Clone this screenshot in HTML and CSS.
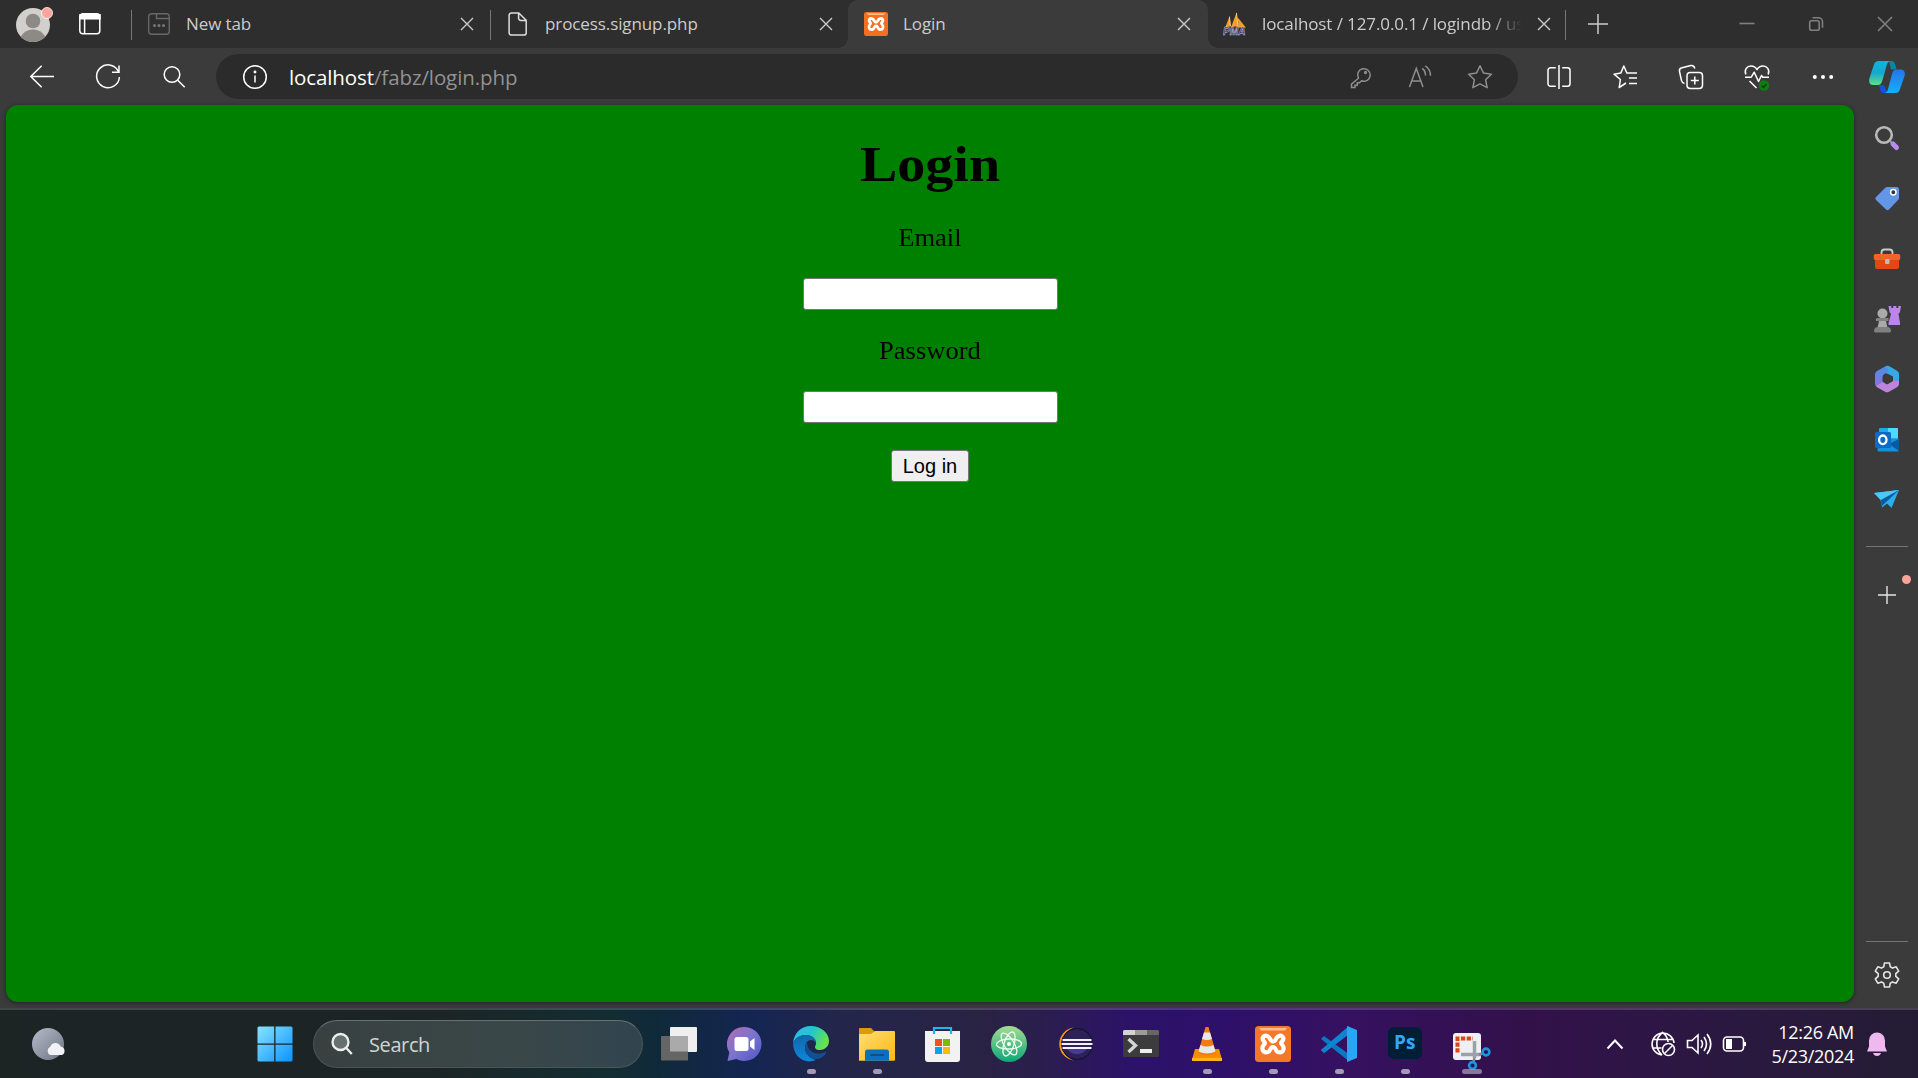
FILE: index.html
```html
<!DOCTYPE html>
<html lang="en">
<head>
<meta charset="utf-8">
<title>Login</title>
<link rel="stylesheet" href="styles.css">
</head>
<body>
<div class="tabstrip">
  <div class="strip-tools">
    <svg class="avatar" width="40" height="40" viewBox="0 0 40 40"><defs><clipPath id="av"><circle cx="18" cy="21" r="17"/></clipPath></defs><circle cx="18" cy="21" r="17" fill="#d2d0cd"/><g clip-path="url(#av)" fill="#8d8985"><circle cx="18" cy="17" r="7.3"/><ellipse cx="18" cy="38" rx="13.5" ry="12.5"/></g><circle cx="32" cy="9" r="5.5" fill="#fba49c" stroke="#fff"  stroke-width=".8"/></svg>
    <svg width="24" height="24" viewBox="0 0 24 24" fill="none" stroke="#fff" stroke-width="1.5"><rect x="1.8" y="1.8" width="20" height="20" rx="3"/><path d="M2 2.8h20v4H2z" fill="#fff"/><path d="M6.6 7v15"/></svg>
  </div>
  <div class="tab divided">
    <svg class="tab-icon" width="24" height="24" viewBox="0 0 24 24" fill="none" stroke="#686868" stroke-width="1.4"><rect x="1.7" y="1.7" width="20.6" height="20.6" rx="3"/><path d="M9.5 2v4.5h12.5"/><g fill="#777" stroke="none"><circle cx="7.5" cy="13.5" r="1.5"/><circle cx="12" cy="13.5" r="1.5"/><circle cx="16.5" cy="13.5" r="1.5"/></g></svg>
    <span class="tab-title">New tab</span>
    <svg class="tab-close" width="14" height="14" viewBox="0 0 14 14"><path d="M1 1l12 12M13 1L1 13"/></svg>
  </div>
  <div class="tab divided second">
    <svg class="tab-icon" width="24" height="24" viewBox="0 0 24 24" fill="none" stroke="#ddd" stroke-width="1.5"><path d="M5.5.9h7.3l7.4 7.4v12.4a2.4 2.4 0 0 1-2.4 2.4H5.5a2.4 2.4 0 0 1-2.4-2.4V3.300A2.400 2.400 0 0 1 5.500.9zM12.600 1v5.200a2.200 2.200 0 0 0 2.200 2.200h5.300"/></svg>
    <span class="tab-title">process.signup.php</span>
    <svg class="tab-close" width="14" height="14" viewBox="0 0 14 14"><path d="M1 1l12 12M13 1L1 13"/></svg>
  </div>
  <div class="tab active">
    <svg class="tab-icon" width="24" height="24" viewBox="0 0 36 36"><rect width="36" height="36" rx="3.500" fill="#f37021"/><path d="M4 2h28l-2 2.500H6z" fill="#ffbd8c"/><path d="M13 10.500c-4-2.500-7 1.500-4 5 1 1 1 2 0 3-3 3.500-1.500 9 4 7.500 3-1 2-5 5-5s2 4 5 5c5.500 1.500 7-4 4-7.500-1-1-1-2 0-3 3-3.500 0-7.500-4-5-3 2-2 5-5 5s-2-3-5-5z" fill="none" stroke="#fff" stroke-width="4.200"/></svg>
    <span class="tab-title">Login</span>
    <svg class="tab-close" width="14" height="14" viewBox="0 0 14 14"><path d="M1 1l12 12M13 1L1 13"/></svg>
  </div>
  <div class="tab last">
    <svg class="tab-icon" width="26" height="26" viewBox="0 0 26 26"><path d="M7 5L2 18q4-3 6.500-2zM14.500 1L8.500 17q4-2 8-1zM16 6l9 11q-2-1-8 0z" fill="#f89c27"/><path d="M7 5l1 10M14.500 1l2 15" stroke="#ffd39a"/><text x="0" y="25" class="pma">PMA</text></svg>
    <span class="tab-title fade">localhost / 127.0.0.1 / logindb / us</span>
    <svg class="tab-close" width="14" height="14" viewBox="0 0 14 14"><path d="M1 1l12 12M13 1L1 13"/></svg>
  </div>
  <svg class="new-tab" width="22" height="22" viewBox="0 0 22 22" stroke="#ccc" stroke-width="1.500"><path d="M11 1v20M1 11h20"/></svg>
  <div class="window-controls">
    <svg width="16" height="16" viewBox="0 0 16 16"><path d="M.5 7.500h15"/></svg>
    <svg width="16" height="16" viewBox="0 0 16 16"><rect x="1.700" y="4.700" width="9.500" height="9.500" rx="1.800"/><path d="M4.500 1.800h6a4 4 0 0 1 4 4v6"/></svg>
    <svg width="16" height="16" viewBox="0 0 16 16"><path d="M1 1l14 14M15 1L1 15"/></svg>
  </div>
</div>

<div class="toolbar">
  <div class="cell"><svg width="26" height="26" viewBox="0 0 26 26"><path d="M25 12.500H2M12.700 1.800L1.800 12.500l10.900 10.700"/></svg></div>
  <div class="cell"><svg width="26" height="26" viewBox="0 0 26 26"><path d="M23.700 8.300A11.400 11.400 0 1 0 24.400 13M24 1.500v6.800h-7"/></svg></div>
  <div class="cell"><svg width="26" height="26" viewBox="0 0 26 26"><circle cx="11" cy="10.500" r="7.800"/><path d="M16.700 16.200l7 7"/></svg></div>
  <div class="address">
    <svg width="26" height="26" viewBox="0 0 26 26"><circle cx="13" cy="13" r="11.300"/><path d="M13 11.500v7"/><circle cx="13" cy="8" r=".7"/></svg>
    <span class="url"><b>localhost</b>/fabz/login.php</span>
    <div class="address-actions">
      <svg width="24" height="24" viewBox="0 0 24 24"><path d="M9.500 13.200a6.300 6.300 0 1 1 3 2.600l-2 2H8.300v2.400H6v2.200H2.500v-3.300z"/><circle cx="16.500" cy="7.500" r=".9"/></svg>
      <svg width="24" height="24" viewBox="0 0 24 24"><path d="M1.500 22L8.300 3.500 15 22M4 16h8.800M14.200 3.500c2.300 1.500 3.300 4 3.300 7M17.300.8c3.500 2.400 5.200 6 5.200 10"/></svg>
      <svg width="26" height="26" viewBox="0 0 26 26"><path class="join" d="M13 1.800l3.500 7.300 7.900 1.100-5.800 5.500 1.500 8L13 19.900l-7.100 3.800 1.500-8-5.800-5.500 7.900-1.100z"/></svg>
    </div>
  </div>
  <div class="actions">
    <div class="cell"><svg width="26" height="26" viewBox="0 0 26 26"><path d="M13 1v24M9.800 3.700H4.500a2.500 2.500 0 0 0-2.500 2.500v13.600a2.500 2.500 0 0 0 2.500 2.500h5.300M16.200 3.700h5.300A2.500 2.500 0 0 1 24 6.200v13.600a2.500 2.500 0 0 1-2.500 2.500h-5.300"/></svg></div>
    <div class="cell"><svg width="26" height="26" viewBox="0 0 26 26"><path class="join" d="M14 19l-6.800 4.500 1.200-8L2 10.200l6.800-1.100L11.800 2l3.100 7.100H25M17 14h8M17 19.500h8"/></svg></div>
    <div class="cell"><svg width="26" height="26" viewBox="0 0 26 26"><rect x="9" y="8.500" width="15.500" height="16" rx="3.200"/><path d="M16.800 12.500v8M12.800 16.500h8M6.500 19.500c-2-.5-2.700-1.500-3-2.800L1.500 7.500c-.4-2 .7-3.300 2.500-3.700l9-2.300c2-.4 3.200.5 3.800 3"/></svg></div>
    <div class="cell"><svg width="28" height="28" viewBox="0 0 28 28"><path class="join" d="M2.800 11.500C1 6.500 4 3 8 3c2.800 0 4.800 1.500 6 3.500C15.200 4.500 17.200 3 20 3c4 0 7 3.500 5.200 8.500M2 14.200h6.200l3-5 4.300 9.300 3-6 1.200 1.700H26M6.500 18l7 7"/><circle cx="21" cy="22.500" r="5.300" fill="#0f7b10" stroke="none"/><path d="M18.700 22.700l1.700 1.800 3-3.500" stroke="#063c06" stroke-width="1.200"/></svg></div>
    <div class="cell"><svg width="24" height="24" viewBox="0 0 24 24"><g fill="#fff" stroke="none"><circle cx="3.800" cy="12" r="2"/><circle cx="12" cy="12" r="2"/><circle cx="20.200" cy="12" r="2"/></g></svg></div>
    <div class="cell copilot"><svg width="36" height="34" viewBox="0 0 36 34"><defs><linearGradient id="cp1" x1="0" y1="0" x2="0" y2="1"><stop offset="0" stop-color="#0cb5df"/><stop offset=".5" stop-color="#16a8cf"/><stop offset="1" stop-color="#5de08c"/></linearGradient><linearGradient id="cp2" x1="0" y1="0" x2="0" y2="1"><stop offset="0" stop-color="#2375e8"/><stop offset="1" stop-color="#13b0fb"/></linearGradient></defs><g stroke="none"><path d="M20 1h2.500c2.500 0 3.500 2 5 8.500H22z" fill="#0785a8"/><path d="M10 25h5l3.500 8H15c-3 0-4-2-5-8z" fill="#1a4de0"/><path d="M10 1h11c-2.500 1-3 3-3.800 6l-4 14c-.8 2.700-2 4-4.500 4H4.500c-4 0-5-3-4-7l4.300-13C5.800 2 7 1 10 1z" fill="url(#cp1)"/><path d="M26 33H15.500c2.500-.5 3-2 3.800-5l3.700-14c.8-3 2-4.500 4.500-4.500h4c4 0 5 3 4 6.500l-4.500 13c-1 3-2 4-5 4z" fill="url(#cp2)"/></g></svg></div>
  </div>
</div>

<div class="workspace">
  <main class="page">
    <h1>Login</h1>
    <form class="login-form">
      <label for="email">Email</label>
      <input id="email" type="email">
      <label for="password">Password</label>
      <input id="password" type="password">
      <button type="button">Log in</button>
    </form>
  </main>
  <aside class="sidebar">
    <div class="side-item"><svg width="28" height="28" viewBox="0 0 28 28"><circle cx="11" cy="11" r="7.800" fill="none" stroke="#b9b9b9" stroke-width="2.600"/><path d="M17 17l3 3" stroke="#999" stroke-width="2"/><path d="M20 20l3.500 3.500" stroke="#b98af0" stroke-width="5" stroke-linecap="round"/></svg></div>
    <div class="side-item"><svg width="28" height="28" viewBox="0 0 28 28"><path d="M14 3h9.500A2.500 2.500 0 0 1 26 5.500V14q0 1-1 2l-9 9.500q-1.500 1.500-3 0L3 16q-1.500-1.500 0-3l9-9q1-1 2-1z" fill="#6496e8"/><circle cx="20.300" cy="8.300" r="2.700" fill="#333" stroke="#fff" stroke-width="1.500"/></svg></div>
    <div class="side-item"><svg width="28" height="28" viewBox="0 0 28 28"><path d="M8.500 9V7.500q0-3 3-3h5q3 0 3 3V9" fill="none" stroke="#ccc" stroke-width="1.800"/><path d="M2 13h24v9q0 2-2 2H4q-2 0-2-2z" fill="#e04a12"/><rect x=".8" y="9" width="26.400" height="6" rx="1.500" fill="#f3622b"/><rect x="12" y="14" width="4.500" height="5" rx="1" fill="#bbb"/></svg></div>
    <div class="side-item"><svg width="28" height="28" viewBox="0 0 28 28"><path d="M15.500 1h2.800v2h2V1h3v2h2V1H28l-1 6-1.500 2 1.500 9v2H15.500v-2L18 9l-1.500-2z" fill="#bd85ec"/><g fill="#aaa"><circle cx="9.500" cy="8.500" r="5"/><path d="M3 14h12v2H13l1.500 7h-10L6 16H3z"/></g><path d="M3.500 13h12v3h-12zM1 26q0-4 4-4h9q4 0 4 4 0 1.500-2 1.500H3Q1 27.500 1 26z" fill="#808080"/></svg></div>
    <div class="side-item"><svg width="28" height="28" viewBox="0 0 28 28"><defs><linearGradient id="m1" x1="0" y1="0" x2="0" y2="1"><stop offset="0" stop-color="#4b8fe6"/><stop offset="1" stop-color="#8e6fe0"/></linearGradient></defs><path d="M13 1q1.500-.7 3 0l8 4.700q2 1 2 3.300v10l-6-2.500v-5L14 8.500 8 7z" fill="#37a8e8"/><path d="M12.500 1.300L4 6Q2 7.200 2 9.500V19q0 2 2 2.500l6-3V10l6-4z" fill="url(#m1)"/><path d="M3 21l7-4 4 2.500 7-4 5 .5v3q0 2-2 3.300l-8 4.500q-2 1-4 0l-8-4.500z" fill="#bd84db"/><path d="M14 9l4.500 2.500v5L14 19l-4.500-2.500v-5z" fill="#3b3b3b"/></svg></div>
    <div class="side-item"><svg width="28" height="28" viewBox="0 0 28 28"><path d="M6 3q0-1 1-1h17q1 0 1 1v11H6z" fill="#20a9e7"/><path d="M15 2h9q1 0 1 1v9H15z" fill="#50d9ff"/><path d="M5 13h21v11q0 1.500-1.500 1.500H6q-1.500 0-1.500-1.500z" fill="#1490df"/><path d="M26 13v12L16 18z" fill="#0b5a9d"/><rect x="2" y="6" width="16" height="16" rx="1.500" fill="#0b6bc5"/><ellipse cx="9.800" cy="13.800" rx="3.700" ry="4.300" fill="none" stroke="#fff" stroke-width="2.300"/></svg></div>
    <div class="side-item"><svg width="28" height="28" viewBox="0 0 28 28"><path d="M1 7l25-3-7.500 18L14 17.500 9 21.500 7.500 14z" fill="#2aaeee"/><path d="M1 7l25-3L8 14z" fill="#4ac8fa"/><path d="M8 14L26 4 12.500 16.500 8.500 20.500z" fill="#075b9e"/></svg></div>
    <div class="side-rule first"></div>
    <div class="side-item add"><svg width="18" height="18" viewBox="0 0 18 18"><path d="M9 0v18M0 9h18" stroke="#e5e5e5" stroke-width="1.400"/></svg><i class="notice"></i></div>
    <div class="side-rule bottom"></div>
    <div class="side-item settings"><svg width="28" height="28" viewBox="0 0 28 28" fill="none" stroke="#e5e5e5" stroke-width="1.600" stroke-linejoin="round"><path d="M11.500 2h5l.8 3.800 2.200 1.300 3.700-1.300 2.500 4.300-2.900 2.600v2.600l2.900 2.600-2.500 4.300-3.700-1.300-2.200 1.300-.8 3.800h-5l-.8-3.800-2.200-1.300-3.700 1.300-2.500-4.300 2.900-2.600v-2.600l-2.900-2.600 2.500-4.300 3.700 1.300 2.200-1.300z"/><circle cx="14" cy="14" r="3.300"/></svg></div>
  </aside>
</div>

<div class="taskbar">
  <div class="app weather"><svg width="36" height="36" viewBox="0 0 36 36"><defs><linearGradient id="moon" x1="0" y1="0" x2="1" y2="1"><stop offset="0" stop-color="#b5bdca"/><stop offset="1" stop-color="#6d7584"/></linearGradient></defs><circle cx="17" cy="18" r="16" fill="url(#moon)"/><path d="M19.500 29a4.500 4.500 0 0 1-.3-8.300 5.600 5.600 0 0 1 10.500-.2A4.500 4.500 0 0 1 31 29z" fill="#f0f2f5"/></svg></div>
  <div class="app start"><svg width="36" height="36" viewBox="0 0 36 36"><defs><linearGradient id="win" x1="0" y1="0" x2="1" y2="1" ><stop offset="0" stop-color="#86e3ff"/><stop offset="1" stop-color="#0b93ff"/></linearGradient></defs><path d="M2 .5h15.200v17H.5V2Q.5.500 2 .500zM18.500.5H34q1.500 0 1.500 1.500v15.500h-17zM.5 18.800h16.700v16.700H2Q.5 35.500.5 34zM18.500 18.800h17V34q0 1.500-1.500 1.500H18.500z" fill="url(#win)"/></svg></div>
  <div class="search"><svg width="24" height="24" viewBox="0 0 24 24" fill="none" stroke="#eee" stroke-width="2.300"><circle cx="10.500" cy="10" r="8" fill="#65706f"/><path d="M16.300 16l5.500 6"/></svg><span>Search</span></div>
  <div class="apps">
    <div class="app"><svg width="36" height="36" viewBox="0 0 36 36"><rect x="9" y="1" width="27" height="25" rx="1" fill="#efefef"/><path d="M1 10h26v24.500H1q-1 0-1-1V11q0-1 1-1z" fill="#656565"/><path d="M9 10h18v15.500H9z" fill="#aaa"/></svg></div>
    <div class="app"><svg width="36" height="36" viewBox="0 0 36 36"><defs><linearGradient id="chat" x1="0" y1="0" x2="1" y2="1"><stop offset="0" stop-color="#b36db0"/><stop offset=".5" stop-color="#7b74cf"/><stop offset="1" stop-color="#4d56c8"/></linearGradient></defs><path d="M17.500 1a17 17 0 1 1-8 32L.5 35l1.800-8.500A17 17 0 0 1 17.500 1z" fill="url(#chat)"/><rect x="7.500" y="11" width="14" height="14" rx="2.500" fill="#fff"/><path d="M23 15.500l4.500-3.500v12L23 20.500z" fill="#fff"/></svg></div>
    <div class="app running"><svg width="36" height="36" viewBox="0 0 36 36"><defs><linearGradient id="e1" x1="0" y1="0" x2="1" y2=".4"><stop offset="0" stop-color="#35b7f0"/><stop offset=".55" stop-color="#26c5cb"/><stop offset="1" stop-color="#65e34d"/></linearGradient><linearGradient id="e2" x1="0" y1="0" x2="0" y2="1"><stop offset="0" stop-color="#1366aa"/><stop offset="1" stop-color="#0b88de"/></linearGradient></defs><path d="M0 17C1 7 8 0 18 0s18 7 18 15c0 6-5 9-9 9-4 0-5-1.500-5-3 0-1 1-1.500 1-4 0-4-4-8-10-8C7 9 2 12 0 17z" fill="url(#e1)"/><path d="M0 17c2-5 7-8 13-8 6 0 10 4 10 8-1-2-3-3-5-3-4 0-6 4-6 8 0 6 5 10 11 12-12 5-23-4-23-17z" fill="url(#e2)"/><path d="M14 16c-5 8 1 18 11 17 4-1 7-4 8-6 .5-1-.3-1.500-1-1-8 4-18 0-18-10z" fill="#114f93"/></svg></div>
    <div class="app running"><svg width="36" height="36" viewBox="0 0 36 36"><defs><linearGradient id="fold" x1="0" y1="0" x2="1" y2="1"><stop offset="0" stop-color="#ffdd73"/><stop offset="1" stop-color="#fbb911"/></linearGradient></defs><path d="M0 3q0-1 1-1h11l4 4v7H0z" fill="#dc9c09"/><path d="M0 8h12l4-3h19q1 0 1 1v28q0 .8-1 .8H0z" fill="url(#fold)"/><path d="M6 34.800V26q0-2.500 2.500-2.500h19q2.500 0 2.500 2.500v8.800z" fill="#0c70c0"/><path d="M11 29h14" stroke="#094b86" stroke-width="1.700"/></svg></div>
    <div class="app"><svg width="36" height="36" viewBox="0 0 36 36"><path d="M0 5h35v28q0 3-3 3H3q-3 0-3-3z" fill="#f2f2f2"/><path d="M9 8V2h17v6" fill="none" stroke="#23b3ee" stroke-width="2.200"/><path d="M10 13h7v7h-7z" fill="#f25022"/><path d="M18 13h7v7h-7z" fill="#7fba00"/><path d="M10 21h7v7h-7z" fill="#00a4ef"/><path d="M18 21h7v7h-7z" fill="#ffb900"/></svg></div>
    <div class="app"><svg width="36" height="36" viewBox="0 0 36 36"><defs><linearGradient id="atom" x1="0" y1="0" x2="0" y2="1"><stop offset="0" stop-color="#a4dc92"/><stop offset="1" stop-color="#0ca676"/></linearGradient></defs><circle cx="18" cy="18" r="18" fill="url(#atom)"/><g fill="none" stroke="#eefaf0" stroke-width="1.300"><ellipse cx="18" cy="18" rx="12.500" ry="5" transform="rotate(-2 18 18)"/><ellipse cx="18" cy="18" rx="12.500" ry="5" transform="rotate(58 18 18)"/><ellipse cx="18" cy="18" rx="12.500" ry="5" transform="rotate(108 18 18)"/></g><circle cx="18" cy="18" r="2" fill="#fff"/></svg></div>
    <div class="app"><svg width="36" height="36" viewBox="0 0 36 36"><path d="M17 1.500a16.600 16.600 0 0 0 0 33C10 32 5 26 5 18S10 4 17 1.500z" fill="#f7941e"/><circle cx="20" cy="18" r="15.500" fill="#2c2255" stroke="#120e2e"/><path d="M10 22h20c-3 8-17 8-20 0z" fill="#473a94"/><path d="M5.500 14h29M4.500 18h31M5.500 22h29" stroke="#f3f0fa" stroke-width="2"/></svg></div>
    <div class="app"><svg width="36" height="36" viewBox="0 0 36 36"><rect y="4" width="36" height="27" rx="1.500" fill="#3c3c3c"/><path d="M0 9V5.500Q0 4 1.500 4H12v5z" fill="#d4d4d4"/><path d="M12 4h12v5H12z" fill="#9c9c9c"/><path d="M24 4h10.500Q36 4 36 5.500V9H24z" fill="#666"/><path d="M5.500 13l7 6.500-7 6.500" fill="none" stroke="#d5d5d5" stroke-width="3.300"/><path d="M17 23h12v4H17z" fill="#eee"/></svg></div>
    <div class="app running"><svg width="36" height="36" viewBox="0 0 36 36"><path d="M6 23h24l3 10.500q.3 1.500-1.500 1.500H4.500Q3 35 3 33.500z" fill="#f98b05"/><path d="M3 32h30v3H3z" fill="#ffb51a"/><path d="M16.500 1h3L27 27q-9 5-18 0z" fill="#ef7d10"/><path d="M15 6.500h6l2 6.500q-5 2-10 0zM11.500 19q6.500 3 13 0l2 6.500q-8.500 4-17 0z" fill="#e9e9e9"/></svg></div>
    <div class="app running"><svg width="36" height="36" viewBox="0 0 36 36"><rect width="36" height="36" rx="3.500" fill="#f5782a"/><path d="M4 2h28l-2 2.500H6z" fill="#ffbd8c"/><path d="M13 10.500c-4-2.500-7 1.500-4 5 1 1 1 2 0 3-3 3.500-1.500 9 4 7.500 3-1 2-5 5-5s2 4 5 5c5.500 1.500 7-4 4-7.500-1-1-1-2 0-3 3-3.500 0-7.500-4-5-3 2-2 5-5 5s-2-3-5-5z" fill="none" stroke="#fff" stroke-width="4.200"/></svg></div>
    <div class="app running"><svg width="36" height="36" viewBox="0 0 36 36"><path d="M0 13l3-3 24 17.500v7z" fill="#0a78c4"/><path d="M27 1v8L3 27l-3-3z" fill="#0b69b0"/><path d="M0 24l3 3L28 8V0z" fill="#1084d0"/><path d="M26 0l10 4v28l-10 4z" fill="#2aa5f2"/></svg></div>
    <div class="app running"><svg width="36" height="36" viewBox="0 0 36 36"><rect x="1" y="1" width="34" height="32" rx="6" fill="#001e36"/><text x="7" y="23" class="ps">Ps</text></svg></div>
    <div class="app running wide"><svg class="snip" width="40" height="38" viewBox="0 0 40 38"><rect x="0" y="1" width="28" height="27" rx="3" fill="#eef0f3"/><path d="M4.500 20.500V6.500H20" fill="none" stroke="#dc4315" stroke-width="4" stroke-dasharray="4.300 1.500"/><path d="M8 22.500h20M21.500 9v17" stroke="#9aa1a7" stroke-width="3.500"/><path d="M26 22.500l4-1M21.500 26l-1 4" stroke="#7b858c" stroke-width="2.500"/><circle cx="33" cy="20" r="3.400" fill="none" stroke="#1f94e0" stroke-width="2.600"/><circle cx="19.500" cy="33.500" r="3.400" fill="none" stroke="#1f94e0" stroke-width="2.600"/></svg></div>
  </div>
  <div class="tray">
    <svg class="chevron" width="18" height="12" viewBox="0 0 18 12"><path d="M1.500 10.500L9 2.500l7.500 8"/></svg>
    <svg width="26" height="26" viewBox="0 0 26 26"><path d="M12 24A11 11 0 1 1 24 12M12 24C5 18 5 7 12.500 1.500 16 4 17.800 7 18 11M2.500 8.500h20M2.500 17h9"/><circle cx="18.500" cy="18.500" r="6"/><path d="M14.500 22.500l8-8"/></svg>
    <svg width="26" height="26" viewBox="0 0 26 26"><path d="M1.500 9.500H6l6-5.500v18l-6-5.500H1.500zM15 9q3 4 0 8M18 6q5 7 0 14M21 3q7.500 10 0 20"/></svg>
    <svg width="26" height="26" viewBox="0 0 26 26"><rect x="1.500" y="6" width="20" height="14" rx="3.500"/><path d="M5 9h4v8H5zM23 11v4" fill="#fff" stroke-width="2"/></svg>
  </div>
  <div class="clock"><div>12:26 AM</div><div>5/23/2024</div></div>
  <svg class="bell" width="22" height="26" viewBox="0 0 22 26"><path d="M11 1.500a8 8 0 0 1 8 8v6l2 5H1l2-5v-6a8 8 0 0 1 8-8zM7 22h8q-1 3-4 3t-4-3z" fill="#efb8ee"/></svg>
</div>
</body>
</html>
```

FILE: styles.css
```css
* { box-sizing: border-box; }
body {
  margin: 0;
  width: 1918px;
  height: 1078px;
  overflow: hidden;
  display: flex;
  flex-direction: column;
  background: #3b3b3b;
  font-family: "Open Sans", "Noto Sans", sans-serif;
}
svg { display: block; flex: none; }

/* Tab strip */
.tabstrip { display: flex; align-items: center; height: 48px; background: #2e2e2e; }
.strip-tools { width: 131px; display: flex; align-items: center; gap: 23px; padding-left: 15px; }
.strip-tools .avatar { margin-top: -1px; }
.tab { position: relative; display: flex; align-items: center; width: 359px; height: 48px; padding: 0 16px; }
.tab.second { width: 358px; padding-right: 15px; }
.tab.active { width: 360px; padding-right: 17px; }
.tab.last { width: 358px; padding: 0 15px; }
.tab.divided::before,
.tab.last::after { content: ""; position: absolute; left: 0; top: 10px; width: 1px; height: 30px; background: #767676; }
.tab.last::after { left: auto; right: 0; }
.tab-icon { width: 24px; }
.tab-title { flex: 1; margin-left: 15px; color: #ccc; font-size: 17px; letter-spacing: -.1px; line-height: 24px; white-space: nowrap; overflow: hidden; }
.tab-close { stroke: #ccc; stroke-width: 1.4; }
.tab.active { background: #3b3b3b; border-radius: 10px 10px 0 0; }
.tab.active::before,
.tab.active::after { content: ""; position: absolute; bottom: 0; width: 10px; height: 10px; }
.tab.active::before { left: -10px; background: radial-gradient(circle at 0 0, transparent 9.5px, #3b3b3b 10px); }
.tab.active::after { right: -10px; background: radial-gradient(circle at 100% 0, transparent 9.5px, #3b3b3b 10px); }
.fade { margin-right: 12px; -webkit-mask-image: linear-gradient(90deg, #000 86%, transparent 99%); mask-image: linear-gradient(90deg, #000 86%, transparent 99%); }
.pma { font: italic bold 11px "Liberation Sans", sans-serif; fill: #34346b; stroke: #c9c9e8; stroke-width: .5px; }
.new-tab { margin-left: 21px; }
.window-controls { display: flex; gap: 53px; margin-left: auto; margin-right: 25px; fill: none; stroke: #808080; stroke-width: 1.6; }

/* Toolbar */
.toolbar { display: flex; align-items: center; height: 57px; padding-left: 9px; fill: none; stroke: #fff; stroke-width: 1.5; }
.cell { display: flex; justify-content: center; width: 66px; }
.cell.copilot { width: 62px; }
.join { stroke-linejoin: round; }
.address { display: flex; align-items: center; width: 1302px; height: 45px; margin-left: 9px; padding: 0 25px 0 26px; border-radius: 23px; background: #2b2b2b; }
.url { margin-left: 21px; color: #929292; font-size: 20.5px; line-height: 28px; letter-spacing: -.1px; }
.url b { color: #fff; font-weight: 400; }
.address-actions { display: flex; align-items: center; gap: 35px; margin-left: auto; stroke: #8f8f8f; }
.actions { display: flex; align-items: center; margin-left: 8.5px; }

/* Page and sidebar */
.workspace { display: flex; height: 903px; padding-left: 6px; }
.page { width: 1848px; height: 897px; padding-top: 28px; border-radius: 12px; background: #008000; box-shadow: 0 1px 4px #222; text-align: center; color: #000; font-family: Georgia, "Liberation Serif", serif; }
h1 { margin: 0; font-size: 50px; line-height: 62px; transform: scaleX(1.12); }
.login-form { display: flex; flex-direction: column; align-items: center; margin-top: 29px; }
label { font-size: 25px; line-height: 28px; transform: scaleX(1.06); }
input { width: 255px; height: 32px; margin: 26px 0 27px; padding: 0; border: 1px solid #767676; border-radius: 3px; background: #fff; }
button { width: 78px; height: 32px; padding: 0; border: 1px solid #767676; border-radius: 3px; background: #efefef; color: #000; font: 20px/28px "Liberation Sans", sans-serif; }
.sidebar { display: flex; flex-direction: column; align-items: center; width: 64px; padding-top: 3px; padding-left: 2px; }
.side-item { position: relative; display: flex; align-items: center; justify-content: center; flex: none; width: 62px; height: 60.3px; }
.side-rule { flex: none; width: 42px; height: 1px; background: #767676; }
.side-rule.first { margin-top: 16px; }
.side-item.add { margin-top: 18px; }
.notice { position: absolute; right: 7px; top: 10px; width: 9px; height: 9px; border-radius: 50%; background: #fba49c; }
.side-rule.bottom { margin-top: auto; }
.side-item.settings { height: 66px; }

/* Taskbar */
.taskbar {
  display: flex; align-items: center; height: 70px; border-top: 2px solid rgba(255, 255, 255, .16); padding-left: 16px;
  background: linear-gradient(90deg, #1c2424 0, #1c2526 440px, #132d33 610px, #10293a 660px, #142552 750px, #23264a 840px, #292343 980px, #2b1d50 1050px, #2c1268 1130px, #2d106a 1220px, #351160 1350px, #321149 1530px, #2e1546 1620px, #2a193f 1750px, #241c34 1918px);
}
.app { position: relative; display: flex; align-items: center; justify-content: center; flex: none; width: 66px; height: 66px; }
.app.weather { margin-right: 160px; }
.app.running::after { content: ""; position: absolute; bottom: 3px; left: 29px; width: 9px; height: 5px; border-radius: 3px; background: #a39bb5; }
.app.running.wide::after { left: 24px; width: 20px; opacity: .75; }
.search { display: flex; align-items: center; width: 330px; height: 48px; margin-left: 5px; padding-left: 16px; gap: 15px; border: 1px solid #4a5555; border-top-color: #667170; border-radius: 24px; background: linear-gradient(90deg, #384140, #3a4748 60%, #31444f); color: #d0d4d5; font-size: 20px; letter-spacing: -.4px; }
.apps { display: flex; margin-left: 3px; }
.ps { font: bold 19px "Open Sans", sans-serif; fill: #31a8ff; }
.snip { margin: 14px 0 0 4px; }
.tray { display: flex; align-items: center; gap: 10px; margin-left: 102px; fill: none; stroke: #fff; stroke-width: 1.6; }
.chevron { margin-right: 16px; stroke-width: 2; }
.clock { width: 106px; color: #fff; font-size: 18px; line-height: 24px; letter-spacing: -.3px; text-align: right; }
.bell { margin-left: 12px; }
```
